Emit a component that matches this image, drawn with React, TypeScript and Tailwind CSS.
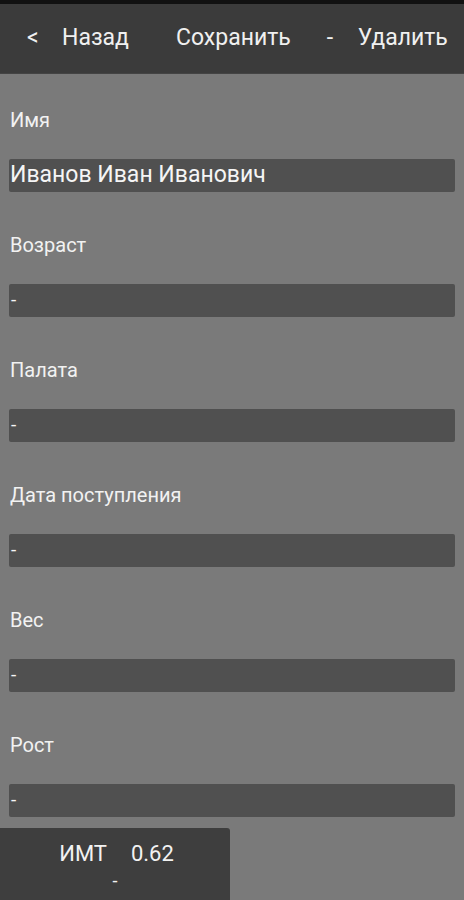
import React from 'react';

interface Field {
    label: string;
    value: string;
}

const fields: Field[] = [
    { label: 'Имя', value: 'Иванов Иван Иванович' },
    { label: 'Возраст', value: '-' },
    { label: 'Палата', value: '-' },
    { label: 'Дата поступления', value: '-' },
    { label: 'Вес', value: '-' },
    { label: 'Рост', value: '-' },
];

const font = { fontFamily: 'Roboto, "Noto Sans", sans-serif' };

export default function App() {
    return (
        <div className="w-[464px] h-[900px] overflow-hidden bg-[#7a7a7a] flex flex-col" style={font}>
            {/* Top bar */}
            <div className="h-[4px] shrink-0 bg-[#111111]" />
            <div className="h-[70px] shrink-0 bg-[#3b3b3b] flex items-center text-[23px] text-[#f0f0f0] border-b border-[#444444]">
                <span className="ml-[27px] w-[35px]">&lt;</span>
                <span>Назад</span>
                <span className="ml-[47px]">Сохранить</span>
                <span className="ml-[36px] w-[31px]">-</span>
                <span>Удалить</span>
            </div>

            {/* Form */}
            <div className="shrink-0 flex flex-col gap-[41px] px-[9px] pt-[34px] pb-[11px]">
                {fields.map((f, i) => (
                    <div key={i} className="flex flex-col">
                        <div className="h-[24px] flex items-center text-[20px] text-[#f2f2f2] ml-[1px]">
                            {f.label}
                        </div>
                        <div
                            className={`mt-[27px] h-[33px] w-[446px] bg-[#505050] rounded-[2px] flex items-center text-[#f5f5f5] ${
                                f.value === '-' ? 'text-[19px] pl-[2px]' : 'text-[23px] pl-[1px]'
                            }`}
                        >
                            {f.value}
                        </div>
                    </div>
                ))}
            </div>

            {/* BMI panel */}
            <div className="shrink-0 w-[230px] h-[72px] bg-[#3e3e3e] rounded-tr-[3px] flex flex-col items-center text-[#f2f2f2]">
                <div className="mt-[9px] text-[22px] flex">
                    <span className="ml-[3px]">ИМТ</span>
                    <span className="ml-[24px]">0.62</span>
                </div>
                <div className="text-[18px] -mt-[3px]">-</div>
            </div>
        </div>
    );
}
